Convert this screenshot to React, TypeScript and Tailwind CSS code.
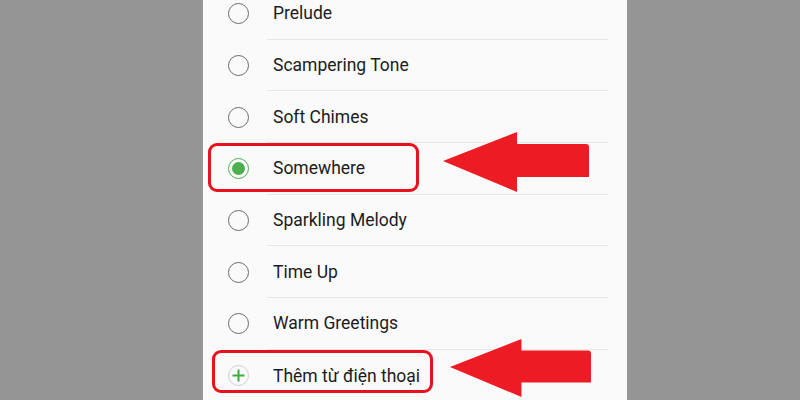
import React from 'react';

const tones = [
  { name: 'Prelude' },
  { name: 'Scampering Tone' },
  { name: 'Soft Chimes' },
  { name: 'Somewhere', selected: true },
  { name: 'Sparkling Melody' },
  { name: 'Time Up' },
  { name: 'Warm Greetings' },
];

function Radio({ selected }: { selected?: boolean }) {
  if (selected) {
    return (
      <div className="w-[21px] h-[21px] rounded-full border-[1.5px] border-[#4caf50] flex items-center justify-center">
        <div className="w-[13px] h-[13px] rounded-full bg-[#4caf50]" />
      </div>
    );
  }
  return <div className="w-[21px] h-[21px] rounded-full border-[1.5px] border-[#6b6b6b]" />;
}

function Arrow({ className }: { className: string }) {
  return (
    <svg className={className} viewBox="0 0 146 60" fill="#ed1c24">
      <path d="M0 29 L74 0 L74 12 L143 12 Q146 12 146 15 L146 45 L74 45 L74 60 Z" />
    </svg>
  );
}

export default function App() {
  return (
    <div className="relative w-[800px] h-[400px] overflow-hidden flex bg-[#959595] font-['Roboto',sans-serif]">
      <div className="w-[203px]" />
      <div className="w-[424px] h-full bg-[#fafafa]">
        <div className="-mt-[12px]">
          {tones.map((t) => (
            <div key={t.name} className="flex h-[51.7px]">
              <div className="w-[64px] flex items-center pl-[25px]">
                <Radio selected={t.selected} />
              </div>
              <div className="flex-1 mr-[19px] border-b border-[#e6e6e6] flex items-center pl-[6px] text-[17.5px] text-[#1c1c1c]">
                {t.name}
              </div>
            </div>
          ))}
          <div className="flex h-[51.7px]">
            <div className="w-[64px] flex items-center pl-[25px]">
              <div className="w-[21px] h-[21px] rounded-full border border-[#d0d0d0] flex items-center justify-center">
                <svg width="13" height="13" viewBox="0 0 13 13" stroke="#3cac3c" strokeWidth="2">
                  <path d="M6.5 0.5 V12.5 M0.5 6.5 H12.5" />
                </svg>
              </div>
            </div>
            <div className="flex-1 mr-[19px] flex items-center pl-[6px] text-[17.5px] text-[#1c1c1c]">
              Thêm từ điện thoại
            </div>
          </div>
        </div>
      </div>
      <div className="flex-1" />

      <div className="absolute left-[208px] top-[143px] w-[211px] h-[49px] rounded-[9px] border-[3px] border-[#e8111c]" />
      <div className="absolute left-[212px] top-[350px] w-[221px] h-[43px] rounded-[9px] border-[3px] border-[#e8111c]" />
      <Arrow className="absolute left-[443px] top-[132px] w-[146px] h-[60px]" />
      <Arrow className="absolute left-[450px] top-[338px] w-[141px] h-[60px]" />
    </div>
  );
}
